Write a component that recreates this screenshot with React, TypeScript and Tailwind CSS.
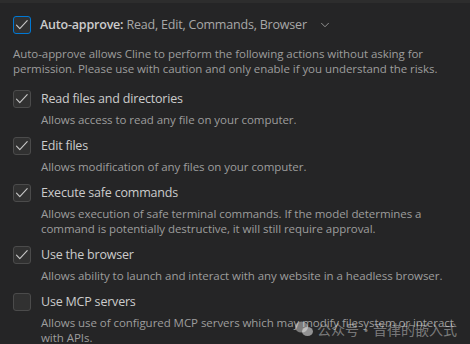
import { ChevronDown } from 'lucide-react';

type Option = {
  title: string;
  description: string;
  checked: boolean;
};

const options: Option[] = [
  { title: 'Read files and directories', description: 'Allows access to read any file on your computer.', checked: true },
  { title: 'Edit files', description: 'Allows modification of any files on your computer.', checked: true },
  {
    title: 'Execute safe commands',
    description:
      'Allows execution of safe terminal commands. If the model determines a command is potentially destructive, it will still require approval.',
    checked: true,
  },
  { title: 'Use the browser', description: 'Allows ability to launch and interact with any website in a headless browser.', checked: true },
  {
    title: 'Use MCP servers',
    description: 'Allows use of configured MCP servers which may modify filesystem or interact with APIs.',
    checked: false,
  },
];

function Box({ checked, focused = false }: { checked: boolean; focused?: boolean }) {
  return (
    <span
      className={
        'flex h-[18px] w-[18px] shrink-0 items-center justify-center rounded-[3px] border bg-[#313131] ' +
        (focused ? 'border-[#0078d4]' : 'border-[#4b4b4b]')
      }
    >
      {checked && (
        <svg width="16" height="16" viewBox="0 0 16 16" fill="none">
          <path d="M2.5 8.2 5.8 11.6 13.2 3.6" stroke="#c8c8c8" strokeWidth="1.1" strokeLinecap="round" strokeLinejoin="round" />
        </svg>
      )}
    </span>
  );
}

export default function App() {
  return (
    <div
      className="relative h-[344px] w-[470px] overflow-hidden border-t-[3px] border-[#2d2d2d] bg-[#252526] px-[13px] pt-[13px]"
      style={{ fontFamily: '"Open Sans", "Noto Sans", sans-serif' }}
    >
      <div className="flex h-[18px] items-center gap-[9px]">
        <Box checked focused />
        <span className="text-[12.5px] leading-[18px] tracking-[-0.2px] text-[#a8a8a8]">
          <span className="font-semibold text-[#cccccc]">Auto-approve:</span> Read, Edit, Commands, Browser
        </span>
        <ChevronDown size={14} strokeWidth={1.4} className="ml-[2px] text-[#a8a8a8]" />
      </div>

      <p className="mt-[12px] text-[11.5px] leading-[15px] tracking-[-0.05px] text-[#9d9d9d]">
        Auto-approve allows Cline to perform the following actions without asking for permission. Please use with caution
        and only enable if you understand the risks.
      </p>

      <div className="mt-[14px] flex flex-col gap-[10px]">
        {options.map((o) => (
          <div key={o.title}>
            <div className="flex h-[18px] items-center gap-[10px]">
              <Box checked={o.checked} />
              <span className="text-[12.5px] leading-[18px] tracking-[-0.2px] text-[#cccccc]">{o.title}</span>
            </div>
            <p className="mt-[4px] pl-[28px] text-[11.5px] leading-[15px] tracking-[-0.05px] text-[#9d9d9d]">
              {o.description}
            </p>
          </div>
        ))}
      </div>

      {/* watermark from the source image */}
      <div
        className="pointer-events-none absolute left-[294px] top-[317px] flex items-center gap-[3px] whitespace-nowrap text-[14px] leading-[18px] text-white/40"
        style={{ fontFamily: '"Noto Sans CJK SC", sans-serif' }}
      >
        <svg width="20" height="18" viewBox="0 0 20 18" fill="none">
          <ellipse cx="7.5" cy="7" rx="6.5" ry="5.5" fill="rgba(255,255,255,0.4)" />
          <ellipse cx="13.5" cy="11.5" rx="5.5" ry="4.5" fill="rgba(255,255,255,0.5)" />
        </svg>
        <span>公众号·音律的嵌入式</span>
      </div>
    </div>
  );
}
